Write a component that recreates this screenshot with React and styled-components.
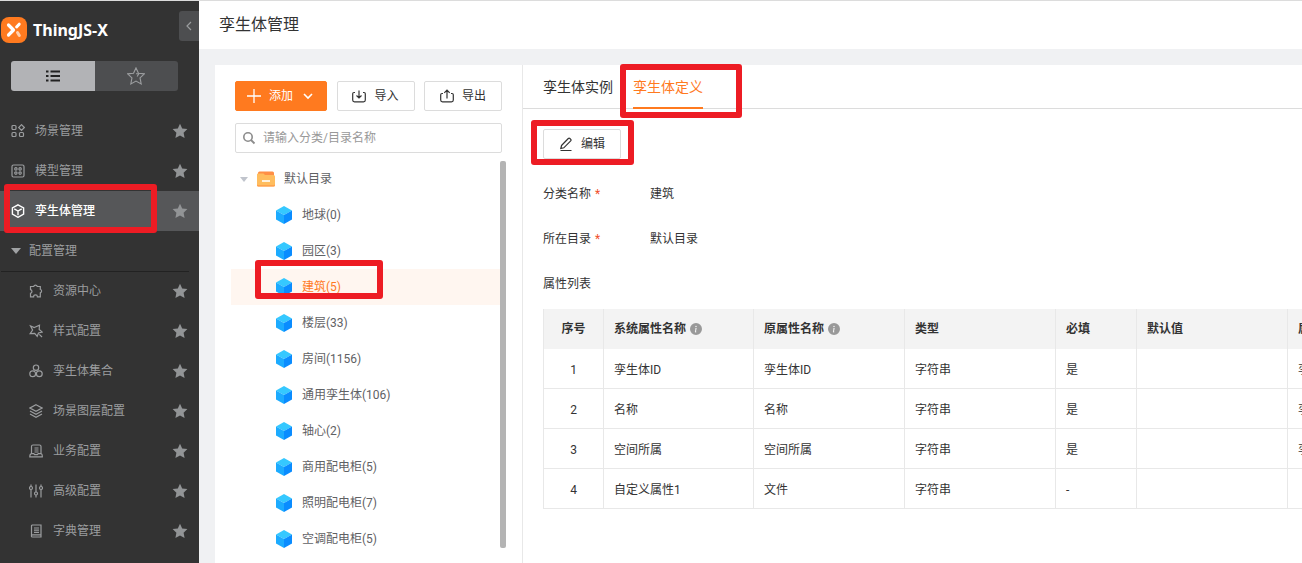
import React from 'react'
import styled, { createGlobalStyle } from 'styled-components'
import { BsInfoCircleFill } from 'react-icons/bs'

const colors = {
    brand: '#ff7a1f',
    sidebar: '#333333',
    sidebarActive: '#565759',
    sidebarText: '#9b9d9f',
    page: '#f0f1f3',
    border: '#dcdcdc',
    line: '#e8e8e8',
    text: '#333333',
    treeText: '#5f6164',
    mark: '#ed1c24',
}

const navItems = [
    { icon: 'scene', label: '场景管理' },
    { icon: 'model', label: '模型管理' },
    { icon: 'cube', label: '孪生体管理', active: true },
]

const configItems = [
    { icon: 'puzzle', label: '资源中心' },
    { icon: 'style', label: '样式配置' },
    { icon: 'group', label: '孪生体集合' },
    { icon: 'layers', label: '场景图层配置' },
    { icon: 'business', label: '业务配置' },
    { icon: 'sliders', label: '高级配置' },
    { icon: 'book', label: '字典管理' },
]

const categories = [
    { name: '地球', count: 0 },
    { name: '园区', count: 3 },
    { name: '建筑', count: 5, active: true },
    { name: '楼层', count: 33 },
    { name: '房间', count: 1156 },
    { name: '通用孪生体', count: 106 },
    { name: '轴心', count: 2 },
    { name: '商用配电柜', count: 5 },
    { name: '照明配电柜', count: 7 },
    { name: '空调配电柜', count: 5 },
]

const columns = [
    { title: '序号', width: 60 },
    { title: '系统属性名称', width: 150, info: true },
    { title: '原属性名称', width: 151, info: true },
    { title: '类型', width: 151 },
    { title: '必填', width: 81 },
    { title: '默认值', width: 151 },
    { title: '属性分组', width: 150 },
]

const rows = [
    ['1', '孪生体ID', '孪生体ID', '字符串', '是', '', '孪生体'],
    ['2', '名称', '名称', '字符串', '是', '', '孪生体'],
    ['3', '空间所属', '空间所属', '字符串', '是', '', '孪生体'],
    ['4', '自定义属性1', '文件', '字符串', '-', '', ''],
]

const shapes = {
    scene: (
        <>
            <rect x="1" y="1.5" width="4" height="4" rx="1" />
            <path d="M10.500 .7l2.800 2.800-2.800 2.800-2.800-2.800z" />
            <rect x="1" y="8.500" width="4" height="4" rx="1" />
            <rect x="8.500" y="8.500" width="4" height="4" rx="1" />
        </>
    ),
    model: (
        <>
            <rect x="1" y="1" width="12" height="12" rx="1.500" />
            <circle cx="4.900" cy="4.900" r="1.200" />
            <circle cx="9.100" cy="4.900" r="1.200" />
            <circle cx="4.900" cy="9.100" r="1.200" />
            <circle cx="9.100" cy="9.100" r="1.200" />
        </>
    ),
    cube: (
        <>
            <path d="M7 .8l5.600 3v6.400L7 13.300l-5.600-3.100V3.800z" strokeWidth="1.400" />
            <path d="M3.300 4.800L7 7l3.700-2.200M7 7v4.200" strokeWidth="1.400" />
        </>
    ),
    puzzle: (
        <path d="M1.500 2.500h3.200a1.900 1.900 0 0 1 3.600 0h3v2.800a1.900 1.900 0 0 1 0 3.600v3.900H8.400a1.900 1.900 0 0 0-3.800 0H1.500V9.300a1.900 1.900 0 0 0 0-3.700z" />
    ),
    style: (
        <>
            <path d="M5.300 3.500L10.500 1.200l-.3 4.300 3 2.500-3.700 1-1.300 3.300-2.500-3-4.500.3L3.600 6 1.500 2z" />
            <path d="M10.300 10.300l2.700 2.700" />
        </>
    ),
    group: (
        <>
            <circle cx="7" cy="3.700" r="2.700" />
            <circle cx="3.700" cy="9.800" r="2.900" />
            <circle cx="10.300" cy="9.800" r="2.900" />
        </>
    ),
    layers: (
        <>
            <path d="M7 .8l6 3.200-6 3.200L1 4z" />
            <path d="M1 7l6 3.200L13 7" />
            <path d="M1 10l6 3.200 6-3.200" />
        </>
    ),
    business: (
        <>
            <path d="M2.500 9.500V2.500Q2.500 1 4 1h6.500Q12 1 12 2.500v7" />
            <path d="M.8 12.800q0-2.800 1.700-3.100h2.300l.8 1h2.800l.8-1H12q1.500.3 1.300 3.100z" />
            <path d="M5.500 4h4M5.500 6h4M5.500 8h4" />
        </>
    ),
    sliders: (
        <>
            <path d="M2 .5v2M2 5.500v8M7 .5v7.500M7 11v2.500M12 .5v2M12 5.500v8" />
            <circle cx="2" cy="4" r="1.500" />
            <circle cx="7" cy="9.500" r="1.500" />
            <circle cx="12" cy="4" r="1.500" />
        </>
    ),
    book: (
        <>
            <path d="M3 1h9v9.800H3.500A1 1 0 0 0 3.500 13H12v-2.200M2.500 12V2q0-1 1-1" />
            <path d="M5 4h5M5 6.200h5M5 8.400h5" />
        </>
    ),
    list: (
        <path d="M0 2.500h2.500M4.500 2.500H14M0 7h2.500M4.500 7H14M0 11.500h2.500M4.500 11.500H14" strokeWidth="1.800" />
    ),
    left: <path d="M9 3L5 7l4 4" />,
    down: <path d="M3 5l4 4 4-4" strokeWidth="1.600" />,
    plus: <path d="M7 0v14M0 7h14" strokeWidth="1.300" />,
    import: <path d="M3 3.500H2Q.7 3.500.7 4.800V11q0 1.800 1.800 1.800h9q1.800 0 1.800-1.800V4.800q0-1.300-1.300-1.300h-1M7 1.500v7.300M4.500 6.500L7 9l2.500-2.500" strokeWidth="1.200" />,
    export: <path d="M3 4.500H2Q.7 4.500.7 5.800V11q0 1.800 1.800 1.800h9q1.800 0 1.800-1.800V5.800q0-1.300-1.300-1.300h-1M7 9.500V1.200M4.300 3.800L7 1l2.700 2.800" strokeWidth="1.200" />,
    edit: <path d="M2.500 8.500L9.300 1.500q.8-.8 1.600 0l.8.800q.8.800 0 1.600L4.800 10.800 1.800 11.500zM1.500 13.500h11" strokeWidth="1.200" />,
    search: (
        <>
            <circle cx="6" cy="6" r="4.200" strokeWidth="1.600" />
            <path d="M9 9l3.500 3.500" strokeWidth="1.800" />
        </>
    ),
}

const Icon = ({ name, size = 14 }) => (
    <Svg width={ size } height={ size } viewBox="0 0 14 14" strokeWidth="1.200" aria-hidden="true">
        { shapes[name] }
    </Svg>
)

const Star = ({ size = 16, outline }) => (
    <Svg width={ size } height={ size } viewBox="0 0 16 16" $filled={ !outline } aria-hidden="true">
        <path d="M8 .8l2.200 4.700 5.200.6-3.800 3.600 1 5.300L8 12.500 3.400 15l1-5.300L.6 6.100l5.200-.6z" />
        { outline && <path d="M8 6h2.500L9 8.500" /> }
    </Svg>
)

const Logo = () => (
    <svg width="26" height="26" viewBox="0 0 26 26" aria-hidden="true">
        <rect width="26" height="26" rx="8" fill={ colors.brand } />
        <path d="M7.500 8l5 5-5 5" fill="none" stroke="#fff" strokeWidth="3.200" strokeLinecap="round" strokeLinejoin="round" />
        <path d="M15.600 10l2.600-2.800" stroke="#fff" strokeWidth="3" strokeLinecap="round" />
        <path d="M16.500 15.500l1.800 3" stroke="#ffd0ae" strokeWidth="3" strokeLinecap="round" />
    </svg>
)

const Folder = () => (
    <svg width="18" height="16" viewBox="0 0 18 16" aria-hidden="true">
        <path d="M1 2q0-1.500 1.500-1.500h13Q17 .5 17 2v10H1z" fill="#ff8f45" />
        <path d="M0 3.500q0-1 1-1h5.500L8 4h8.500Q18 4 18 5.500V14q0 1.500-1.500 1.500h-15Q0 15.500 0 14z" fill="#ffbd5e" />
        <path d="M0 13v1q0 1.500 1.500 1.500h15Q18 15.500 18 14v-1q0 1.300-1.500 1.300h-15Q0 14.300 0 13z" fill="#ff9a4a" />
        <path d="M5 10h8" stroke="#fff" strokeWidth="1.600" />
    </svg>
)

const BlueCube = () => (
    <svg width="16" height="18" viewBox="0 0 16 18" aria-hidden="true">
        <path d="M8 0l8 4.500L8 9 0 4.500z" fill="#35c8ff" />
        <path d="M0 4.500L8 9v9l-8-4.500z" fill="#1cabff" />
        <path d="M16 4.500L8 9v9l8-4.500z" fill="#0a8cff" />
    </svg>
)

const NavEntry = ({ item, nested }) => (
    <NavItem $active={ item.active }>
        <NavLink href="#" $nested={ nested } $active={ item.active }>
            <Icon name={ item.icon } />
            { item.label }
        </NavLink>
        <StarButton aria-label={ `收藏${item.label}` }>
            <Star />
        </StarButton>
        { item.active && <Mark $top={ -7 } $right={ 42 } $bottom={ -2 } $left={ 4 } /> }
    </NavItem>
)

const App = () => (
    <>
        <GlobalStyle />
        <Page>
            <Sidebar>
                <Brand>
                    <Logo />
                    <BrandName>ThingJS-X</BrandName>
                    <Collapse aria-label="收起"><Icon name="left" /></Collapse>
                </Brand>
                <Switcher>
                    <SwitchButton $active aria-label="菜单"><Icon name="list" /></SwitchButton>
                    <SwitchButton aria-label="收藏"><Star size={ 18 } outline /></SwitchButton>
                </Switcher>
                <nav>
                    <NavList>
                        { navItems.map(item => <NavEntry key={ item.label } item={ item } />) }
                    </NavList>
                    <GroupTitle><Caret />配置管理</GroupTitle>
                    <NavList>
                        { configItems.map(item => <NavEntry key={ item.label } item={ item } nested />) }
                    </NavList>
                </nav>
            </Sidebar>
            <Main>
                <Header>孪生体管理</Header>
                <Content>
                    <TreePanel>
                        <Actions>
                            <Button $primary><Icon name="plus" />添加<Icon name="down" /></Button>
                            <Button><Icon name="import" />导入</Button>
                            <Button><Icon name="export" />导出</Button>
                        </Actions>
                        <Search>
                            <Icon name="search" />
                            <SearchInput placeholder="请输入分类/目录名称" aria-label="分类/目录名称" />
                        </Search>
                        <TreeArea>
                            <Tree>
                                <TreeRoot><Caret $light /><Folder /><span>默认目录</span></TreeRoot>
                                { categories.map(({ name, count, active }) => (
                                    <TreeItem key={ name } $active={ active }>
                                        <TreeButton $active={ active }>
                                            <BlueCube />
                                            { `${name}(${count})` }
                                        </TreeButton>
                                        { active && <Mark $top={ -9 } $right={ 117 } $bottom={ 6 } $left={ 24 } /> }
                                    </TreeItem>
                                )) }
                            </Tree>
                            <ScrollThumb />
                        </TreeArea>
                    </TreePanel>
                    <DetailPanel>
                        <Tabs role="tablist">
                            <Tab role="tab" aria-selected="false">孪生体实例</Tab>
                            <Tab role="tab" aria-selected="true" $active>
                                孪生体定义
                                <Mark $top={ -1 } $right={ -39 } $bottom={ -11 } $left={ -13 } />
                            </Tab>
                        </Tabs>
                        <Detail>
                            <EditWrap>
                                <Button><Icon name="edit" />编辑</Button>
                                <Mark $top={ -9 } $right={ -13 } $bottom={ -6 } $left={ -12 } />
                            </EditWrap>
                            <Fields>
                                <dt>分类名称<Required>*</Required></dt>
                                <dd>建筑</dd>
                                <dt>所在目录<Required>*</Required></dt>
                                <dd>默认目录</dd>
                            </Fields>
                            <TableTitle>属性列表</TableTitle>
                            <TableScroll>
                                <Table>
                                    <colgroup>
                                        { columns.map(({ title, width }) => <Col key={ title } $width={ width } />) }
                                    </colgroup>
                                    <thead>
                                        <tr>
                                            { columns.map(({ title, info }) => (
                                                <th key={ title }>
                                                    { title }
                                                    { info && <BsInfoCircleFill size={ 12 } color="#999" /> }
                                                </th>
                                            )) }
                                        </tr>
                                    </thead>
                                    <tbody>
                                        { rows.map(row => (
                                            <tr key={ row[0] }>
                                                { row.map((cell, i) => <td key={ columns[i].title }>{ cell }</td>) }
                                            </tr>
                                        )) }
                                    </tbody>
                                </Table>
                            </TableScroll>
                        </Detail>
                    </DetailPanel>
                </Content>
            </Main>
        </Page>
    </>
)

export default App

const GlobalStyle = createGlobalStyle`
    * {
        box-sizing: border-box;
    }

    body {
        margin: 0;
        color: ${colors.text};
        font-family: Roboto, 'Noto Sans CJK SC', sans-serif;
        font-size: 12px;
        line-height: 20px;
    }

    button, input {
        padding: 0;
        border: none;
        background: none;
        color: inherit;
        font: inherit;
    }

    a {
        color: inherit;
        text-decoration: none;
    }
`

const Svg = styled.svg`
    flex: none;
    fill: ${({ $filled }) => $filled ? 'currentColor' : 'none'};
    stroke: ${({ $filled }) => $filled ? 'none' : 'currentColor'};
`

const Mark = styled.span`
    position: absolute;
    z-index: 1;
    top: ${({ $top }) => $top}px;
    right: ${({ $right }) => $right}px;
    bottom: ${({ $bottom }) => $bottom}px;
    left: ${({ $left }) => $left}px;
    border: 6px solid ${colors.mark};
    border-radius: 3px;
    pointer-events: none;
`

const Page = styled.div`
    display: flex;
    height: 100vh;
    overflow: hidden;
    border-top: 1px solid ${colors.border};
`

const Sidebar = styled.aside`
    flex: none;
    width: 199px;
    background: ${colors.sidebar};
    color: ${colors.sidebarText};
`

const Brand = styled.div`
    display: flex;
    align-items: center;
    gap: 6px;
    height: 60px;
    padding: 0 0 2px 1px;
`

const BrandName = styled.span`
    flex: 1;
    color: #fff;
    font-family: 'Noto Sans', sans-serif;
    font-size: 16px;
    font-weight: 700;
`

const Collapse = styled.button`
    display: flex;
    align-items: center;
    justify-content: center;
    align-self: flex-start;
    width: 20px;
    height: 30px;
    margin-top: 10px;
    border-radius: 3px 0 0 3px;
    background: #4d4e50;
`

const Switcher = styled.div`
    display: flex;
    height: 30px;
    margin: 0 21px 20px 11px;
    border-radius: 3px;
    overflow: hidden;
`

const SwitchButton = styled.button`
    display: flex;
    flex: 1;
    align-items: center;
    justify-content: center;
    background: ${({ $active }) => $active ? '#b2b3b6' : '#4d4e50'};
    color: ${({ $active }) => $active ? '#222' : colors.sidebarText};
`

const NavList = styled.ul`
    margin: 0;
    padding: 0;
    list-style: none;
`

const NavItem = styled.li`
    position: relative;
    display: flex;
    align-items: center;
    height: 40px;
    padding-right: 11px;
    background: ${({ $active }) => $active ? colors.sidebarActive : 'none'};
`

const NavLink = styled.a`
    display: flex;
    flex: 1;
    align-items: center;
    gap: 10px;
    padding-left: ${({ $nested }) => $nested ? 29 : 11}px;
    color: ${({ $active }) => $active ? '#fff' : 'inherit'};
    font-weight: ${({ $active }) => $active ? 500 : 400};
`

const StarButton = styled.button`
    display: flex;
    color: #929496;
`

const GroupTitle = styled.div`
    display: flex;
    align-items: center;
    gap: 8px;
    height: 40px;
    margin: 0 10px 0 1px;
    padding-left: 10px;
    box-shadow: 0 1px 0 #222;
`

const Caret = styled.span`
    border-top: ${({ $light }) => $light ? '5px solid #c0c4cc' : '6px solid #a0a2a4'};
    border-right: ${({ $light }) => $light ? 4 : 5}px solid transparent;
    border-left: ${({ $light }) => $light ? 4 : 5}px solid transparent;
`

const Main = styled.main`
    display: flex;
    flex: 1;
    flex-direction: column;
    min-width: 0;
    background: ${colors.page};
`

const Header = styled.header`
    padding: 12px 20px;
    background: #fff;
    font-size: 16px;
    line-height: 24px;
`

const Content = styled.div`
    display: flex;
    flex: 1;
    min-height: 0;
    margin: 16px 0 0 16px;
    background: #fff;
`

const TreePanel = styled.section`
    display: flex;
    flex: none;
    flex-direction: column;
    width: 308px;
    padding: 16px 16px 0;
    border-right: 1px solid ${colors.line};
`

const Actions = styled.div`
    display: flex;
    justify-content: space-between;
    margin: 0 4px;
`

const Button = styled.button`
    display: flex;
    align-items: center;
    justify-content: center;
    gap: 8px;
    width: ${({ $primary }) => $primary ? 92 : 78}px;
    height: 30px;
    border: 1px solid ${({ $primary }) => $primary ? colors.brand : colors.border};
    border-radius: 2px;
    background: ${({ $primary }) => $primary ? colors.brand : '#fff'};
    color: ${({ $primary }) => $primary ? '#fff' : colors.text};
`

const Search = styled.label`
    display: flex;
    align-items: center;
    gap: 7px;
    height: 30px;
    margin: 12px 4px 8px;
    padding: 0 6px;
    border: 1px solid ${colors.border};
    border-radius: 2px;
    color: #8c8c8c;
`

const SearchInput = styled.input`
    flex: 1;
    min-width: 0;
    outline: none;

    &::placeholder {
        color: #999;
    }
`

const TreeArea = styled.div`
    display: flex;
    flex: 1;
    min-height: 0;
`

const Tree = styled.ul`
    flex: 1;
    margin: 0;
    padding: 0;
    color: ${colors.treeText};
    list-style: none;
`

const TreeRoot = styled.li`
    display: flex;
    align-items: center;
    gap: 9px;
    height: 36px;
    padding-left: 9px;
`

const TreeItem = styled.li`
    position: relative;
    background: ${({ $active }) => $active ? '#fff6f0' : 'none'};
`

const TreeButton = styled.button`
    display: flex;
    align-items: center;
    gap: 10px;
    width: 100%;
    height: 36px;
    padding-left: 45px;
    color: ${({ $active }) => $active ? colors.brand : 'inherit'};
`

const ScrollThumb = styled.div`
    flex: none;
    width: 6px;
    margin-bottom: 15px;
    border-radius: 2px;
    background: #b4b4b4;
`

const DetailPanel = styled.section`
    flex: 1;
    min-width: 0;
`

const Tabs = styled.div`
    display: flex;
    gap: 20px;
    height: 44px;
    padding-left: 20px;
    border-bottom: 1px solid ${colors.border};
`

const Tab = styled.button`
    position: relative;
    height: 44px;
    padding-top: 2px;
    border-bottom: 2px solid ${({ $active }) => $active ? colors.brand : 'transparent'};
    color: ${({ $active }) => $active ? colors.brand : 'inherit'};
    font-size: 14px;
`

const Detail = styled.div`
    padding: 20px 0 0 20px;
`

const EditWrap = styled.div`
    position: relative;
    width: fit-content;
`

const Fields = styled.dl`
    display: grid;
    grid-template-columns: 107px 1fr;
    margin: 13px 0 0;
    line-height: 45px;

    dd {
        margin: 0;
    }
`

const Required = styled.span`
    margin-left: 4px;
    color: #f0502d;
`

const TableTitle = styled.div`
    margin-bottom: 2px;
    line-height: 45px;
`

const TableScroll = styled.div`
    overflow: hidden;
`

const Table = styled.table`
    width: 894px;
    table-layout: fixed;
    border-spacing: 0;

    th, td {
        height: 40px;
        padding: 0 10px;
        border-left: 1px solid ${colors.line};
        text-align: left;
    }

    th {
        background: #f3f3f3;
        font-weight: 700;
    }

    td {
        padding-top: 2px;
        border-bottom: 1px solid ${colors.line};
    }

    th:first-child, td:first-child {
        text-align: center;
    }

    th svg {
        margin-left: 4px;
        vertical-align: -2px;
    }
`

const Col = styled.col`
    width: ${({ $width }) => $width}px;
`
